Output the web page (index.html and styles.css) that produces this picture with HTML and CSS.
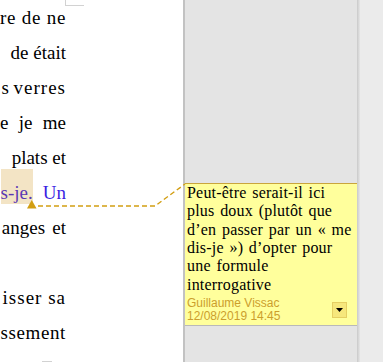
FILE: index.html
```html
<!DOCTYPE html>
<html lang="fr">
<head>
  <meta charset="UTF-8">
  <title>Commentaire</title>
  <link rel="stylesheet" href="styles.css">
</head>
<body>
  <!-- Document page (cropped) -->
  <div class="page">
    <span class="corner corner-top"></span>
    <span class="corner corner-bottom"></span>
    <div class="text">
      <div class="line l1">re de ne</div>
      <div class="line">de était</div>
      <div class="line l3">s verres</div>
      <div class="line l4">e je me</div>
      <div class="line">plats et</div>
      <div class="line"><span><span class="hl">s-je.</span><span class="ins">Un</span></span></div>
      <div class="line l7">anges et</div>
      <div class="line"></div>
      <div class="line l9">isser sa</div>
      <div class="line l10">ssement</div>
    </div>
  </div>

  <!-- Comment sidebar -->
  <div class="sidebar">
    <div class="comment">
      <div class="comment-text">
        Peut-être serait-il ici<br>
        plus doux (plutôt que<br>
        d’en passer par un «&nbsp;me<br>
        dis-je&nbsp;») d’opter pour<br>
        une formule<br>
        interrogative
      </div>
      <div class="comment-meta">
        <div class="author">
          <div>Guillaume Vissac</div>
          <div>12/08/2019 14:45</div>
        </div>
        <button class="menu-btn">
          <svg width="7" height="4" viewBox="0 0 7 4"><polygon points="0,0 7,0 3.5,4" fill="#000"/></svg>
        </button>
      </div>
    </div>
  </div>
  <div class="shadow"></div>
  <div class="rest"></div>

  <!-- Anchor line from the text to the comment -->
  <svg class="anchor" width="383" height="362" viewBox="0 0 383 362">
    <polyline points="38,206 155,206 185,184" fill="none" stroke="#d29e12" stroke-width="1.4" stroke-dasharray="5,3"/>
    <polygon points="27,208.5 36.5,208.5 31.75,200" fill="#d29e12"/>
  </svg>
</body>
</html>
```

FILE: styles.css
```css
/* Basic Reset */
body, div, button {
  margin: 0;
  padding: 0;
  box-sizing: border-box;
}

body {
  display: flex;
  height: 362px;
  overflow: hidden;
  background-color: #ebebeb;
  position: relative;
}

/* White page */
.page {
  width: 183px;
  flex-shrink: 0;
  background-color: #fff;
  position: relative;
}

.text {
  width: 66px;
  font-family: "Liberation Serif", serif;
  font-size: 19px;
  color: #000;
}

.line {
  height: 35px;
  line-height: 35px;
  display: flex;
  justify-content: flex-end;
  white-space: pre;
}

/* Justified lines: spacing per line */
.l1 {
  letter-spacing: 0.6px;
  word-spacing: 0.5px;
}

.l3 {
  letter-spacing: 1px;
  word-spacing: -2px;
}

.l4 {
  word-spacing: 5.6px;
}

.l7 {
  word-spacing: 2.5px;
}

.l9 {
  letter-spacing: 1px;
}

.l10 {
  letter-spacing: 0.6px;
}

/* Highlighted word with its comment anchor */
.hl {
  background-color: #f3e4c5;
  color: #5b38b4;
  padding: 13px 0 1px 0;
}

.ins {
  margin-left: 10px;
  color: #3a1ee2;
}

/* Text boundary marks */
.corner {
  position: absolute;
  border-color: #d2d2d2;
  border-style: solid;
  border-width: 0;
}

.corner-top {
  left: 65px;
  top: 0;
  width: 18px;
  height: 5px;
  border-left-width: 1px;
  border-bottom-width: 1px;
}

.corner-bottom {
  left: 42px;
  top: 361px;
  width: 10px;
  height: 1px;
  border-top-width: 1px;
}

/* Comments margin */
.sidebar {
  width: 174px;
  flex-shrink: 0;
  background-color: #e4e4e4;
  border-left: 2px solid #c2c2c2;
  padding-top: 183px;
}

.comment {
  background-color: #ffff9c;
  border-top: 1px solid #c9a53c;
  border-bottom: 1px solid #b9b9b9;
  padding: 0 0 1px 2px;
}

.comment-text {
  font-family: "Liberation Serif", serif;
  font-size: 16px;
  letter-spacing: 0.2px;
  word-spacing: 1.5px;
  line-height: 18.33px;
  color: #000;
  white-space: nowrap;
}

.comment-meta {
  display: flex;
  align-items: center;
  justify-content: space-between;
  padding-top: 3px;
  padding-right: 10px;
}

.author {
  font-family: "Liberation Sans", sans-serif;
  font-size: 12px;
  line-height: 13.5px;
  color: #cc9e2c;
}

.menu-btn {
  width: 15px;
  height: 16px;
  background-color: #f6e77c;
  border: 1px solid #e6cf62;
  display: flex;
  align-items: center;
  justify-content: center;
  margin-top: -1px;
}

.shadow {
  width: 3px;
  flex-shrink: 0;
  background: linear-gradient(to right, #c9c9c9, #e6e6e6);
}

.rest {
  flex: 1;
}

.anchor {
  position: absolute;
  left: 0;
  top: 0;
  pointer-events: none;
}
```
